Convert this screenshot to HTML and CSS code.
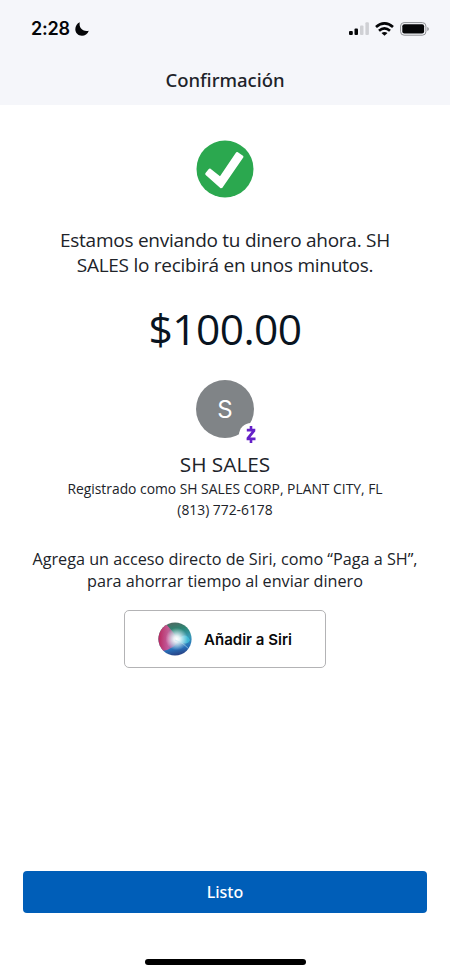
FILE: index.html
```html
<!DOCTYPE html>
<html lang="es">
<head>
<meta charset="utf-8">
<meta name="viewport" content="width=device-width, initial-scale=1">
<title>Confirmación</title>
<link rel="stylesheet" href="styles.css">
</head>
<body>
<div class="screen">
  <header class="header">
    <div class="status">
      <div class="clock"><span class="time">2:28</span>
        <svg class="moon" width="14" height="14" viewBox="0 0 14 14"><path d="M4.800.3C3.600 5.200 7.300 10 13.800 8.700 12.600 12 9.900 13.700 7 13.700 3.200 13.700.300 10.800.300 7.200.300 4.100 2.100 1.400 4.800.3Z" fill="#050608"/></svg>
      </div>
      <div class="indicators">
        <svg width="20" height="14" viewBox="0 0 20 14"><rect x="0" y="9" width="3.800" height="4" rx="1" fill="#050608"/><rect x="5.500" y="6.600" width="3.500" height="6.400" rx="1" fill="#050608"/><rect x="11" y="3.500" width="3.500" height="9.500" rx="1" fill="#cfd0d4"/><rect x="16.400" y=".3" width="3.500" height="12.700" rx="1" fill="#cfd0d4"/></svg>
        <svg width="19" height="14" viewBox="0 0 19 14"><g fill="none" stroke="#050608" stroke-width="2.700"><path d="M1 5.100Q9.500-2.300 18 5.100"/><path d="M4 8.700Q9.500 3.900 15 8.700"/></g><path d="M6.500 10.900Q9.500 8.900 12.500 10.900L9.500 13.800Z" fill="#050608"/></svg>
        <svg width="29" height="14" viewBox="0 0 29 14"><rect x=".6" y=".6" width="25.300" height="12.600" rx="3.500" fill="#f5f6fa" stroke="#8e9094"/><rect x="2.300" y="2.200" width="21.800" height="9.300" rx="2" fill="#050608"/><path d="M27.300 5V9Q28.800 8.500 28.800 7T27.300 5Z" fill="#8e9094"/></svg>
      </div>
    </div>
    <h1 class="title">Confirmación</h1>
  </header>
  <main class="content">
    <svg class="success" width="58" height="58" viewBox="0 0 58 58"><circle cx="29" cy="29" r="28.500" fill="#2ba84f"/><path d="M9.300 33.200 13 28.700 14.200 28.500 24 36.200 40.200 12.200 41.500 12 47.300 16 47.400 17.200 26.200 48 24.600 48.200 9.400 34.700Z" fill="#fff"/></svg>
    <p class="message">Estamos enviando tu dinero ahora. SH<br>SALES lo recibirá en unos minutos.</p>
    <p class="amount">$100.00</p>
    <div class="avatar"><span class="initial">S</span>
      <span class="badge"><svg width="10" height="18" viewBox="0 0 10 18"><path d="M3.700 0H6.300V2.800H9.300V5.200L4.300 11.600H9.500V14.200H6.300V17H3.700V14.200H.600V11.800L5.600 5.400H.800V2.800H3.700Z" fill="#6420c8"/></svg></span>
    </div>
    <h2 class="name">SH SALES</h2>
    <p class="details">Registrado como SH SALES CORP, PLANT CITY, FL<br>(813) 772-6178</p>
    <p class="hint">Agrega un acceso directo de Siri, como “Paga a SH”,<br>para ahorrar tiempo al enviar dinero</p>
    <button class="siri">
      <svg width="34" height="34" viewBox="0 0 34 34">
        <defs>
          <radialGradient id="glow" cx=".55" cy=".5" r=".33"><stop offset="0" stop-color="#fff"/><stop offset=".27" stop-color="#fff" stop-opacity=".85"/><stop offset="1" stop-color="#fff" stop-opacity="0"/></radialGradient>
          <linearGradient id="base" x1=".3" y1="0" x2=".5" y2="1"><stop offset="0" stop-color="#54655f"/><stop offset=".25" stop-color="#2c8472"/><stop offset=".52" stop-color="#389ab5"/><stop offset=".8" stop-color="#2770b9"/><stop offset="1" stop-color="#283f82"/></linearGradient>
          <linearGradient id="pink"><stop offset="0" stop-color="#b9235a"/><stop offset=".5" stop-color="#da579b" stop-opacity=".85"/><stop offset="1" stop-color="#ca73b6" stop-opacity="0"/></linearGradient>
          <clipPath id="orb"><circle cx="17" cy="17" r="16.600"/></clipPath>
        </defs>
        <g clip-path="url(#orb)"><path d="M0 0H34V34H0Z" fill="url(#base)"/><path d="M0 0H6Q14 8 21 18 17 27 4 29L0 34Z" fill="url(#pink)"/><path d="M19 18Q28 9 32 18 29 25 19 18Z" fill="#43c5df" opacity=".75"/><path d="M0 0H34V34H0Z" fill="url(#glow)"/><path d="M17 18Q26 21 31 27" fill="none" stroke="#b9e5f4" stroke-width=".8" opacity=".7"/></g>
      </svg>
      <span class="siri-text">Añadir a Siri</span>
    </button>
  </main>
  <footer class="footer">
    <button class="done">Listo</button>
    <div class="home"></div>
  </footer>
</div>
</body>
</html>
```
FILE: styles.css
```css
* { box-sizing: border-box; }
body { margin: 0; background: #fff; font-family: "Open Sans", sans-serif; color: #202329; }
h1, h2, p { margin: 0; font-weight: 400; }
button { font: inherit; padding: 0; }
svg { display: block; }
.screen { width: 450px; height: 975px; display: flex; flex-direction: column; overflow: hidden; }
.header { height: 105px; background: #f5f6fa; text-align: center; }
.status { height: 58px; padding: 0 21px 0 31px; display: flex; align-items: center; justify-content: space-between; }
.clock { display: flex; align-items: center; gap: 5px; color: #050608; }
.time { font: 600 18px/20px Inter, sans-serif; letter-spacing: -0.2px; }
.indicators { display: flex; align-items: center; gap: 6px; }
.title { font-family: "Noto Sans", sans-serif; font-size: 18.500px; line-height: 24px; font-weight: 500; margin-top: 10px; color: #202329; }
.content { flex: 1; display: flex; flex-direction: column; align-items: center; text-align: center; white-space: nowrap; }
.success { margin-top: 35px; }
.message { margin-top: 30px; font-size: 19px; line-height: 25px; letter-spacing: -0.26px; }
.amount { margin-top: 26px; font-size: 42.500px; line-height: 50px; letter-spacing: -0.6px; color: #09141f; }
.avatar { position: relative; width: 58px; height: 58px; margin-top: 26px; border-radius: 50%; background: #808487; display: flex; align-items: center; justify-content: center; color: #fff; }
.initial { font: 400 24px/30px Inter, sans-serif; margin-top: 2px; }
.badge { position: absolute; left: 43px; top: 43px; width: 24px; height: 24px; border-radius: 50%; background: #fff; display: flex; align-items: center; justify-content: center; }
.name { margin-top: 12px; font-size: 20.800px; line-height: 28px; }
.details { margin-top: 1px; font-size: 13.850px; line-height: 20.500px; }
.hint { margin-top: 29px; font-size: 16.200px; line-height: 21.500px; }
.siri { width: 202px; height: 58px; margin-top: 18px; border: 1px solid #b3b3b5; border-radius: 5px; background: #fff; display: flex; align-items: center; justify-content: center; gap: 12px; color: #0a0a0b; }
.siri-text { font: 600 15px/20px Inter, sans-serif; margin-top: 1px; }
.footer { height: 104px; padding: 0 23px; display: flex; flex-direction: column; align-items: center; }
.done { width: 404px; height: 42px; border: 0; border-radius: 4px; background: #005eb8; color: #fff; font-family: "Noto Sans", sans-serif; font-size: 16px; font-weight: 500; }
.home { width: 161px; height: 6px; margin-top: 46px; border-radius: 3px; background: #000; }
```
